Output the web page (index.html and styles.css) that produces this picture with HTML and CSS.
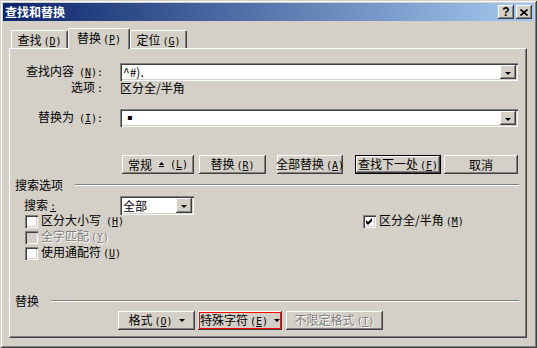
FILE: index.html
```html
<!DOCTYPE html>
<html lang="zh-CN">
<head>
<meta charset="UTF-8">
<title>查找和替换</title>
<link rel="stylesheet" href="styles.css">
</head>
<body>

<div class="window">
  <div class="titlebar">
    <span class="title">查找和替换</span>
    <div class="caption-btns">
      <span class="cap-btn help">?</span>
      <span class="cap-btn close">
        <svg width="8" height="7" viewBox="0 0 8 7"><path d="M0.5 0.5 L7.5 6.5 M7.5 0.5 L0.5 6.5" stroke="#000" stroke-width="1.6"/></svg>
      </span>
    </div>
  </div>

  <div class="client">
    <div class="tabs">
      <div class="tab"><span>查找<span class="mn">(<u>D</u>)</span></span></div>
      <div class="tab active"><span>替换<span class="mn">(<u>P</u>)</span></span></div>
      <div class="tab"><span>定位<span class="mn">(<u>G</u>)</span></span></div>
    </div>

    <div class="panel">
      <div class="field-row find">
        <span class="field-label">查找内容<span class="mn wide">(<u>N</u>):</span></span>
        <div class="combo">
          <span class="combo-text">^#).</span>
          <span class="drop-btn"><i class="arrow"></i></span>
        </div>
      </div>
      <div class="field-row opts">
        <span class="field-label">选项<span class="mn">:</span></span>
        <span>区分全/半角</span>
      </div>
      <div class="field-row repl">
        <span class="field-label">替换为<span class="mn wide">(<u>I</u>):</span></span>
        <div class="combo">
          <span class="combo-text bullet">▪</span>
          <span class="drop-btn"><i class="arrow"></i></span>
        </div>
      </div>

      <div class="btn-row main-btns">
        <span class="btn b-less"><span>常规</span><svg class="less-icon" width="5" height="5" viewBox="0 0 5 5"><path d="M0 3 L2.5 0 L5 3 Z M0 4 H5 V5 H0 Z" fill="#000"/></svg><span class="mn">(<u>L</u>)</span></span>
        <span class="btn b-repl"><span>替换<span class="mn">(<u>R</u>)</span></span></span>
        <span class="btn b-all"><span>全部替换<span class="mn">(<u>A</u>)</span></span></span>
        <span class="btn b-next default"><span>查找下一处<span class="mn">(<u>F</u>)</span></span></span>
        <span class="btn b-cancel"><span>取消</span></span>
      </div>

      <div class="group-head search-head">
        <span>搜索选项</span>
        <span class="etch"></span>
      </div>

      <div class="search-grid">
        <div class="search-row">
          <span class="search-label">搜索<span class="mn"><u>:</u></span></span>
          <div class="select">
            <span class="select-text">全部</span>
            <span class="drop-btn tall"><i class="arrow"></i></span>
          </div>
        </div>
        <label class="check c-case"><span class="box"></span><span>区分大小写<span class="mn wide">(<u>H</u>)</span></span></label>
        <label class="check c-width"><span class="box"><svg width="7" height="7" viewBox="0 0 7 7"><path d="M0 2 L2 4 L6 0 L6 3 L2 7 L0 5 Z" fill="#000"/></svg></span><span>区分全/半角<span class="mn">(<u>M</u>)</span></span></label>
        <label class="check c-whole disabled"><span class="box"></span><span>全字匹配<span class="mn">(<u>Y</u>)</span></span></label>
        <label class="check c-wild"><span class="box"></span><span>使用通配符<span class="mn">(<u>U</u>)</span></span></label>
      </div>

      <div class="group-head repl-head">
        <span>替换</span>
        <span class="etch"></span>
      </div>

      <div class="btn-row bottom-btns">
        <span class="btn b-format"><span>格式<span class="mn">(<u>O</u>)</span></span><i class="arrow"></i></span>
        <span class="btn b-special marked"><span>特殊字符<span class="mn">(<u>E</u>)</span></span><i class="arrow"></i></span>
        <span class="btn b-noformat disabled"><span>不限定格式<span class="mn">(<u>T</u>)</span></span></span>
      </div>
    </div>
  </div>
</div>

</body>
</html>
```

FILE: styles.css
```css
body {
  margin: 0;
  background: #d4d0c8;
  font-family: "Noto Sans CJK SC", "Noto Sans", sans-serif;
  font-size: 12px;
  line-height: 14px;
  color: #000;
}
u {
  text-decoration-thickness: 1px;
  text-underline-offset: 1px;
}
.mn {
  font-family: "DejaVu Sans Mono", "Liberation Mono", monospace;
  font-size: 10px;
  padding-left: 2px;
  white-space: pre;
}
.mn.wide {
  padding-left: 5px;
}
.window {
  width: 537px;
  height: 348px;
  box-sizing: border-box;
  padding: 3px;
  background: #d4d0c8;
  box-shadow: inset 1px 1px #d4d0c8, inset -1px -1px #404040, inset 2px 2px #fff, inset -2px -2px #808080;
}
.titlebar {
  height: 18px;
  display: flex;
  align-items: center;
  justify-content: space-between;
  padding: 0 2px 0 2px;
  background: linear-gradient(to right, #0a246a, #a6caf0);
}
.title {
  color: #fff;
  font-weight: bold;
}
.caption-btns {
  display: flex;
  gap: 2px;
}
.cap-btn {
  width: 16px;
  height: 14px;
  box-sizing: border-box;
  display: flex;
  align-items: center;
  justify-content: center;
  background: #d4d0c8;
  box-shadow: inset -1px -1px #404040, inset 1px 1px #fff, inset -2px -2px #808080;
}
.help {
  font-family: "Liberation Sans", sans-serif;
  font-weight: bold;
  font-size: 12px;
  line-height: 12px;
  padding-bottom: 1px;
}
.close svg {
  display: block;
}
.client {
  padding: 7px 7px 0 6px;
}
.tabs {
  display: flex;
  align-items: flex-end;
  height: 20px;
  padding-left: 2px;
}
.tab {
  width: 57px;
  height: 18px;
  box-sizing: border-box;
  display: flex;
  align-items: center;
  justify-content: center;
  white-space: nowrap;
  border-top: 1px solid #fff;
  border-left: 1px solid #fff;
  border-right: 1px solid #404040;
  border-radius: 2px 2px 0 0;
  box-shadow: inset -1px 0 #808080;
  padding-top: 2px;
}
.tab.active {
  width: 62px;
  height: 21px;
  margin-bottom: -1px;
  position: relative;
  z-index: 1;
  background: #d4d0c8;
  padding-top: 0;
}
.panel {
  width: 518px;
  height: 290px;
  box-sizing: border-box;
  border-top: 1px solid #fff;
  border-left: 1px solid #fff;
  border-right: 1px solid #404040;
  border-bottom: 1px solid #404040;
  box-shadow: inset -1px -1px #808080;
  padding-left: 5px;
}
.field-row {
  display: flex;
  align-items: center;
  gap: 17px;
}
.field-label {
  width: 88px;
  text-align: right;
  white-space: nowrap;
}
.find {
  margin-top: 14px;
  height: 18px;
}
.opts {
  height: 14px;
}
.repl {
  margin-top: 14px;
  height: 18px;
}
.combo {
  width: 398px;
  height: 18px;
  box-sizing: border-box;
  display: flex;
  align-items: center;
  padding: 2px;
  background: #fff;
  box-shadow: inset 1px 1px #808080, inset 2px 2px #404040, inset -1px -1px #fff, inset -2px -2px #d4d0c8;
}
.combo-text {
  padding-left: 1px;
}
.bullet {
  font-family: "DejaVu Sans", sans-serif;
  font-size: 8px;
  padding-left: 5px;
}
.drop-btn {
  margin-left: auto;
  width: 16px;
  height: 14px;
  box-sizing: border-box;
  display: flex;
  align-items: center;
  justify-content: center;
  background: #d4d0c8;
  box-shadow: inset -1px -1px #404040, inset 1px 1px #fff, inset -2px -2px #808080;
}
.drop-btn.tall {
  height: 15px;
}
.arrow {
  display: inline-block;
  width: 0;
  height: 0;
  border-left: 3px solid transparent;
  border-right: 3px solid transparent;
  border-top: 3px solid #000;
}
.drop-btn .arrow {
  margin-top: 2px;
}
.btn-row {
  display: flex;
}
.btn {
  height: 19px;
  box-sizing: border-box;
  display: flex;
  align-items: center;
  justify-content: center;
  white-space: nowrap;
  background: #d4d0c8;
  box-shadow: inset -1px -1px #404040, inset 1px 1px #fff, inset -2px -2px #808080;
}
.btn.default {
  border: 1px solid #000;
}
.btn.disabled {
  color: #808080;
  text-shadow: 1px 1px 0 #fff;
}
.btn.marked {
  outline: 1px solid #f00;
  outline-offset: -2px;
}
.main-btns {
  margin-top: 28px;
  margin-left: 107px;
}
.b-less { width: 72px; }
.less-icon { margin: 0 4px 0 7px; }
.b-repl { width: 67px; margin-left: 5px; }
.b-all { width: 66px; margin-left: 11px; }
.b-next { width: 86px; margin-left: 12px; }
.b-cancel { width: 74px; margin-left: 3px; }
.group-head {
  display: flex;
  align-items: center;
  gap: 12px;
  height: 14px;
  margin-right: 7px;
}
.etch {
  flex: 1;
  border-top: 1px solid #808080;
  border-bottom: 1px solid #fff;
}
.search-head {
  margin-top: 4px;
}
.search-grid {
  display: grid;
  grid-template-columns: 339px auto;
  grid-template-rows: 17px 16px 16px 16px;
  align-items: center;
  margin-top: 4px;
  margin-left: 9px;
}
.search-row {
  grid-column: 1;
  grid-row: 1;
  display: flex;
  align-self: start;
  align-items: center;
  height: 19px;
}
.search-label {
  width: 96px;
}
.select {
  width: 74px;
  height: 19px;
  box-sizing: border-box;
  display: flex;
  align-items: center;
  padding: 2px;
  background: #fff;
  box-shadow: inset 1px 1px #808080, inset 2px 2px #404040, inset -1px -1px #fff, inset -2px -2px #d4d0c8;
}
.select-text {
  padding-left: 1px;
}
.check {
  display: flex;
  align-items: center;
  gap: 3px;
  margin-left: 1px;
  white-space: nowrap;
}
.c-case { grid-column: 1; grid-row: 2; }
.c-width { grid-column: 2; grid-row: 2; margin-left: 0; }
.c-whole { grid-column: 1; grid-row: 3; }
.c-wild { grid-column: 1; grid-row: 4; }
.box {
  width: 13px;
  height: 13px;
  box-sizing: border-box;
  display: flex;
  align-items: center;
  justify-content: center;
  background: #fff;
  box-shadow: inset 1px 1px #808080, inset 2px 2px #404040, inset -1px -1px #fff, inset -2px -2px #d4d0c8;
}
.box svg {
  display: block;
}
.check.disabled {
  color: #808080;
  text-shadow: 1px 1px 0 #fff;
}
.check.disabled .box {
  background: #d4d0c8;
}
.repl-head {
  margin-top: 33px;
}
.bottom-btns {
  margin-top: 3px;
  margin-left: 103px;
}
.b-format { width: 77px; }
.b-format .arrow, .b-special .arrow { margin-left: 6px; }
.b-special { width: 84px; margin-left: 3px; }
.b-noformat { width: 97px; margin-left: 4px; }
```
